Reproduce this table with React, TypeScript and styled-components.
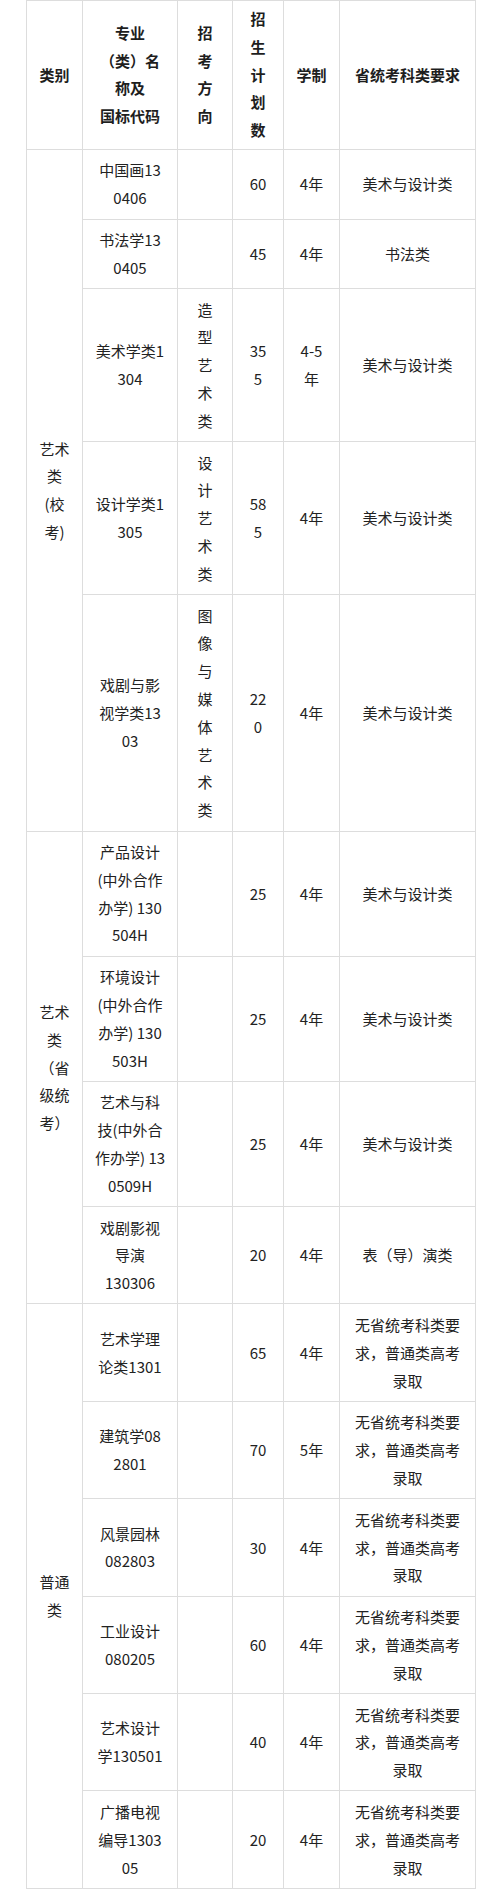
import React from "react";
import styled, { createGlobalStyle } from "styled-components";

const Global = createGlobalStyle`
  html, body { margin: 0; padding: 0; background: #ffffff; }
  body { font-family: "Noto Sans CJK SC", "Noto Sans", sans-serif; color: #222222; }
`;

const Page = styled.div`
  padding: 0 0 0 26px;
  width: 500px;
  box-sizing: border-box;
`;

const Table = styled.table`
  border-collapse: collapse;
  table-layout: fixed;
  width: 449px;
  font-size: 15px;
  line-height: 27.8px;
`;

const HeadCell = styled.th`
  border: 1px solid #dddddd;
  padding: 4px 4px 5px;
  font-weight: 700;
  text-align: center;
  vertical-align: middle;
  white-space: nowrap;
  color: #1e1e1e;
`;

const Cell = styled.td`
  border: 1px solid #dddddd;
  padding: 6.5px 4px;
  font-weight: 400;
  text-align: center;
  vertical-align: middle;
  white-space: nowrap;
  color: #222222;
`;

type Row = {
  cat?: string[];
  span?: number;
  name: string[];
  dir: string[];
  num: string[];
  years: string[];
  req: string[];
};

const ART = ["美术与设计类"];
const GEN = ["无省统考科类要", "求，普通类高考", "录取"];

const rows: Row[] = [
  { cat: ["艺术", "类", "(校", "考)"], span: 5, name: ["中国画13", "0406"], dir: [], num: ["60"], years: ["4年"], req: ART },
  { name: ["书法学13", "0405"], dir: [], num: ["45"], years: ["4年"], req: ["书法类"] },
  { name: ["美术学类1", "304"], dir: ["造", "型", "艺", "术", "类"], num: ["35", "5"], years: ["4-5", "年"], req: ART },
  { name: ["设计学类1", "305"], dir: ["设", "计", "艺", "术", "类"], num: ["58", "5"], years: ["4年"], req: ART },
  { name: ["戏剧与影", "视学类13", "03"], dir: ["图", "像", "与", "媒", "体", "艺", "术", "类"], num: ["22", "0"], years: ["4年"], req: ART },
  { cat: ["艺术", "类", "（省", "级统", "考）"], span: 4, name: ["产品设计", "(中外合作", "办学) 130", "504H"], dir: [], num: ["25"], years: ["4年"], req: ART },
  { name: ["环境设计", "(中外合作", "办学) 130", "503H"], dir: [], num: ["25"], years: ["4年"], req: ART },
  { name: ["艺术与科", "技(中外合", "作办学) 13", "0509H"], dir: [], num: ["25"], years: ["4年"], req: ART },
  { name: ["戏剧影视", "导演", "130306"], dir: [], num: ["20"], years: ["4年"], req: ["表（导）演类"] },
  { cat: ["普通", "类"], span: 7, name: ["艺术学理", "论类1301"], dir: [], num: ["65"], years: ["4年"], req: GEN },
  { name: ["建筑学08", "2801"], dir: [], num: ["70"], years: ["5年"], req: GEN },
  { name: ["风景园林", "082803"], dir: [], num: ["30"], years: ["4年"], req: GEN },
  { name: ["工业设计", "080205"], dir: [], num: ["60"], years: ["4年"], req: GEN },
  { name: ["艺术设计", "学130501"], dir: [], num: ["40"], years: ["4年"], req: GEN },
  { name: ["广播电视", "编导1303", "05"], dir: [], num: ["20"], years: ["4年"], req: GEN },
];

const Lines: React.FC<{ lines: string[] }> = ({ lines }) => (
  <>
    {lines.map((l, i) => (
      <React.Fragment key={i}>
        {i > 0 && <br />}
        {l}
      </React.Fragment>
    ))}
  </>
);

export default function App() {
  return (
    <Page>
      <Global />
      <Table>
        <colgroup>
          <col style={{ width: 56 }} />
          <col style={{ width: 95 }} />
          <col style={{ width: 55 }} />
          <col style={{ width: 51 }} />
          <col style={{ width: 56 }} />
          <col style={{ width: 136 }} />
        </colgroup>
        <thead>
          <tr>
            <HeadCell>类别</HeadCell>
            <HeadCell><Lines lines={["专业", "（类）名", "称及", "国标代码"]} /></HeadCell>
            <HeadCell><Lines lines={["招", "考", "方", "向"]} /></HeadCell>
            <HeadCell><Lines lines={["招", "生", "计", "划", "数"]} /></HeadCell>
            <HeadCell>学制</HeadCell>
            <HeadCell>省统考科类要求</HeadCell>
          </tr>
        </thead>
        <tbody>
          {rows.map((r, i) => (
            <tr key={i}>
              {r.cat && (
                <Cell rowSpan={r.span}><Lines lines={r.cat} /></Cell>
              )}
              <Cell><Lines lines={r.name} /></Cell>
              <Cell><Lines lines={r.dir} /></Cell>
              <Cell><Lines lines={r.num} /></Cell>
              <Cell><Lines lines={r.years} /></Cell>
              <Cell><Lines lines={r.req} /></Cell>
            </tr>
          ))}
        </tbody>
      </Table>
    </Page>
  );
}
